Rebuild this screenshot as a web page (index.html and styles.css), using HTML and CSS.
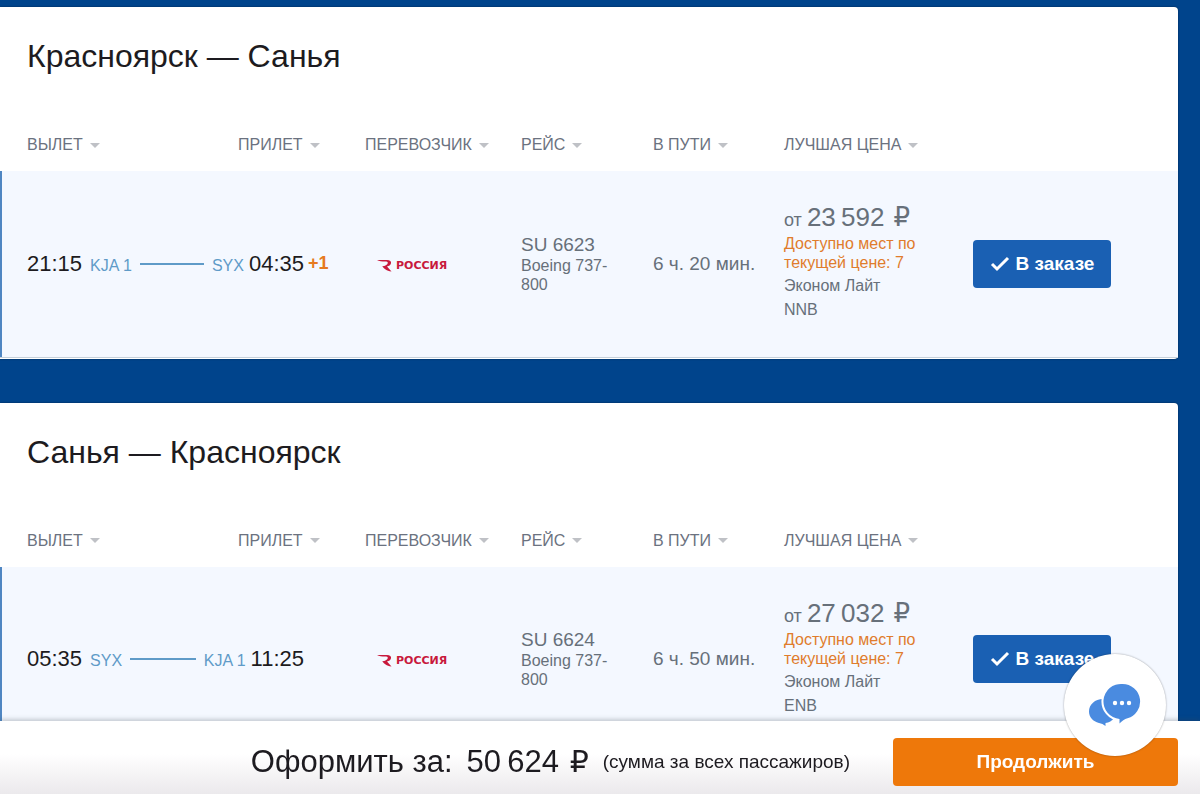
FILE: index.html
```html
<!DOCTYPE html>
<html lang="ru">
<head>
  <meta charset="UTF-8" />
  <meta name="viewport" content="width=device-width, initial-scale=1" />
  <title>Красноярск — Санья</title>
  <link rel="stylesheet" href="styles.css">
</head>
<body>
  <main>
    <section class="card">
      <h2>Красноярск — Санья</h2>
      <table>
        <thead>
          <tr>
            <th class="col-departure"><button class="sort">Вылет</button></th>
            <th class="col-arrival"><button class="sort">Прилет</button></th>
            <th class="col-carrier"><button class="sort">Перевозчик</button></th>
            <th class="col-flight"><button class="sort">Рейс</button></th>
            <th class="col-duration"><button class="sort">В пути</button></th>
            <th class="col-price"><button class="sort">Лучшая цена</button></th>
            <th></th>
          </tr>
        </thead>
        <tbody>
          <tr>
            <td colspan="2">
              <div class="times">
                <div class="route">
                  <span class="time">21:15</span>
                  <span class="airport">KJA 1</span>
                  <span class="line"></span>
                  <span class="airport">SYX</span>
                  <span class="time arrival">04:35</span>
                </div>
                <span class="next-day">+1</span>
              </div>
            </td>
            <td>
              <div class="carrier">
                <svg width="15" height="13" viewBox="0 0 15 13" aria-hidden="true">
                  <path d="M0 1 H10 C13 1 14.500 2.300 14 4.200 C13.600 6 12 7 10 7.400 L14.500 12.500 C9.500 11.800 7 9.500 5.200 7.200 C8 7 10.500 6 10.800 4 C11 2.700 9.500 2.600 8 2.500 C5 2.400 2 2.400 0 1 Z" fill="#c8193c"/>
                </svg>
                <span>РОССИЯ</span>
              </div>
            </td>
            <td>
              <div class="flight">SU 6623</div>
              <div class="plane">Boeing 737-800</div>
            </td>
            <td class="duration">6 ч. 20 мин.</td>
            <td>
              <div class="price">от <b>23&thinsp;592 <span class="rub">₽</span></b></div>
              <div class="seats">Доступно мест по текущей цене: 7</div>
              <div class="fare">Эконом Лайт</div>
              <div class="fare">NNB</div>
            </td>
            <td>
              <button class="btn-order">
                <svg width="20" height="16" viewBox="0 0 20 16" aria-hidden="true">
                  <path d="M2 8 L7 13 L18 2" fill="none" stroke="#fff" stroke-width="3"/>
                </svg>
                В заказе
              </button>
            </td>
          </tr>
        </tbody>
      </table>
    </section>

    <section class="card">
      <h2>Санья — Красноярск</h2>
      <table>
        <thead>
          <tr>
            <th class="col-departure"><button class="sort">Вылет</button></th>
            <th class="col-arrival"><button class="sort">Прилет</button></th>
            <th class="col-carrier"><button class="sort">Перевозчик</button></th>
            <th class="col-flight"><button class="sort">Рейс</button></th>
            <th class="col-duration"><button class="sort">В пути</button></th>
            <th class="col-price"><button class="sort">Лучшая цена</button></th>
            <th></th>
          </tr>
        </thead>
        <tbody>
          <tr>
            <td colspan="2">
              <div class="times">
                <div class="route">
                  <span class="time">05:35</span>
                  <span class="airport">SYX</span>
                  <span class="line"></span>
                  <span class="airport">KJA 1</span>
                  <span class="time arrival">11:25</span>
                </div>
              </div>
            </td>
            <td>
              <div class="carrier">
                <svg width="15" height="13" viewBox="0 0 15 13" aria-hidden="true">
                  <path d="M0 1 H10 C13 1 14.500 2.300 14 4.200 C13.600 6 12 7 10 7.400 L14.500 12.500 C9.500 11.800 7 9.500 5.200 7.200 C8 7 10.500 6 10.800 4 C11 2.700 9.500 2.600 8 2.500 C5 2.400 2 2.400 0 1 Z" fill="#c8193c"/>
                </svg>
                <span>РОССИЯ</span>
              </div>
            </td>
            <td>
              <div class="flight">SU 6624</div>
              <div class="plane">Boeing 737-800</div>
            </td>
            <td class="duration">6 ч. 50 мин.</td>
            <td>
              <div class="price">от <b>27&thinsp;032 <span class="rub">₽</span></b></div>
              <div class="seats">Доступно мест по текущей цене: 7</div>
              <div class="fare">Эконом Лайт</div>
              <div class="fare">ENB</div>
            </td>
            <td>
              <button class="btn-order">
                <svg width="20" height="16" viewBox="0 0 20 16" aria-hidden="true">
                  <path d="M2 8 L7 13 L18 2" fill="none" stroke="#fff" stroke-width="3"/>
                </svg>
                В заказе
              </button>
            </td>
          </tr>
        </tbody>
      </table>
    </section>
  </main>

  <footer class="total-bar">
    <span class="total">Оформить за:</span>
    <span class="total">50&thinsp;624 <span class="rub">₽</span></span>
    <span class="total-note">(сумма за всех пассажиров)</span>
    <button class="btn-continue">Продолжить</button>
  </footer>

  <button class="chat" aria-label="Чат">
    <svg width="52" height="44" viewBox="0 0 52 44" aria-hidden="true">
      <path d="M14 16 C6 16 0 21.500 0 28.500 C0 34 4 38.500 10 40 C12.500 40.600 14.500 41.300 16.500 43 V40 C20 39.500 23 38 25 35 L24 17 Z" fill="#4a8be0"/>
      <path d="M33.500 1 A17.500 17.500 0 0 1 38.500 35.300 C35.500 36.200 33 37.800 30.500 40.500 V36 A17.500 17.500 0 0 1 33.500 1 Z" fill="#4a8be0" stroke="#fff" stroke-width="4" paint-order="stroke"/>
      <circle cx="26" cy="20" r="2.200" fill="#fff"/>
      <circle cx="33" cy="20" r="2.200" fill="#fff"/>
      <circle cx="40" cy="20" r="2.200" fill="#fff"/>
    </svg>
  </button>
</body>
</html>
```
FILE: styles.css
```css
* {
  box-sizing: border-box;
}

body {
  margin: 0;
  min-height: 100vh;
  padding: 7px 22px 0 0;
  background: #00448c;
  font-family: "Liberation Sans", Arial, sans-serif;
  color: #1d1b20;
}

button {
  font-family: inherit;
  border: none;
  cursor: pointer;
}

.card {
  background: #fff;
  border-radius: 0 4px 4px 0;
  margin-bottom: 44px;
  padding-bottom: 1px;
  box-shadow: 0 0 2px rgba(0, 0, 0, 0.5);
}

h2 {
  margin: 0;
  padding: 29px 27px 0;
  font-size: 32px;
  line-height: 40px;
  font-weight: normal;
}

table {
  width: 100%;
  table-layout: fixed;
  border-collapse: collapse;
}

th {
  height: 95px;
  padding: 0 0 15px;
  text-align: left;
  vertical-align: bottom;
}

.col-departure { width: 238px; }
.col-arrival { width: 127px; }
.col-carrier { width: 156px; }
.col-flight { width: 132px; }
.col-duration { width: 131px; }
.col-price { width: 189px; }

th:first-child,
td:first-child {
  padding-left: 27px;
}

.sort {
  display: flex;
  align-items: center;
  gap: 7px;
  padding: 0;
  background: none;
  color: #6b7280;
  font-size: 16px;
  line-height: 22px;
  text-transform: uppercase;
  white-space: nowrap;
}

.sort::after {
  content: "";
  border: 5px solid transparent;
  border-top-color: #bfc1c6;
  border-bottom: none;
}

td {
  height: 186px;
  padding: 0;
  vertical-align: middle;
  color: #67707a;
}

tbody tr {
  background: #f4f8ff;
  border-bottom: 1px solid #c5d0da;
}

tbody td:first-child {
  box-shadow: inset 2px 0 #4f86c2;
}

.times {
  display: flex;
  align-items: center;
  gap: 4px;
}

.route {
  display: flex;
  align-items: baseline;
  gap: 8px;
  width: 277px;
}

.time {
  font-size: 22px;
  line-height: 26px;
  color: #1d1b20;
}

.arrival {
  margin-left: -3px;
}

.airport {
  font-size: 16px;
  color: #5f9bc8;
}

.line {
  flex: 1;
  align-self: center;
  height: 2px;
  background: #5f9bc8;
}

.next-day {
  font-size: 18px;
  font-weight: bold;
  color: #e67a20;
}

.carrier {
  display: flex;
  align-items: center;
  gap: 4px;
  padding: 3px 0 0 12px;
  color: #c8193c;
  font: bold 11px "DejaVu Sans", sans-serif;
}

.flight {
  font-size: 19px;
  line-height: 22px;
}

.plane {
  width: 100px;
  font-size: 16px;
  line-height: 19px;
}

.duration {
  font-size: 19px;
}

.price {
  font-size: 18px;
  line-height: 28px;
}

.price b {
  font-size: 26px;
  line-height: 24px;
  font-weight: normal;
}

.rub {
  margin-left: 2px;
  font-family: "DejaVu Sans", sans-serif;
  font-size: 26px;
  line-height: 24px;
}

.seats {
  width: 150px;
  margin-bottom: 2px;
  font-size: 16px;
  line-height: 19px;
  color: #e07c2c;
}

.fare {
  font-size: 16px;
  line-height: 24px;
}

.btn-order {
  display: flex;
  align-items: center;
  justify-content: center;
  gap: 6px;
  width: 138px;
  height: 48px;
  border-radius: 4px;
  background: #1a60b3;
  color: #fff;
  font-size: 19px;
  font-weight: bold;
}

.total-bar {
  position: fixed;
  left: 0;
  right: 0;
  bottom: 0;
  display: flex;
  align-items: center;
  justify-content: flex-end;
  height: 73px;
  padding: 8px 22px 0 0;
  background: linear-gradient(#fff 45%, #ebe9ec);
  box-shadow: 0 -2px 4px rgba(60, 70, 80, 0.25);
}

.total {
  margin-right: 14px;
  font-size: 31px;
  line-height: 36px;
}

.total .rub {
  font-size: 30px;
}

.total-note {
  margin-right: 43px;
  font-size: 19px;
}

.btn-continue {
  width: 285px;
  height: 48px;
  border-radius: 4px;
  background: #ee780a;
  color: #fff;
  font-size: 19px;
  font-weight: bold;
}

.chat {
  position: fixed;
  right: 34px;
  bottom: 38px;
  display: flex;
  align-items: center;
  justify-content: center;
  width: 102px;
  height: 102px;
  padding: 0;
  border-radius: 50%;
  background: #fff;
  box-shadow: 0 0 2px rgba(0, 0, 0, 0.4);
}
```
